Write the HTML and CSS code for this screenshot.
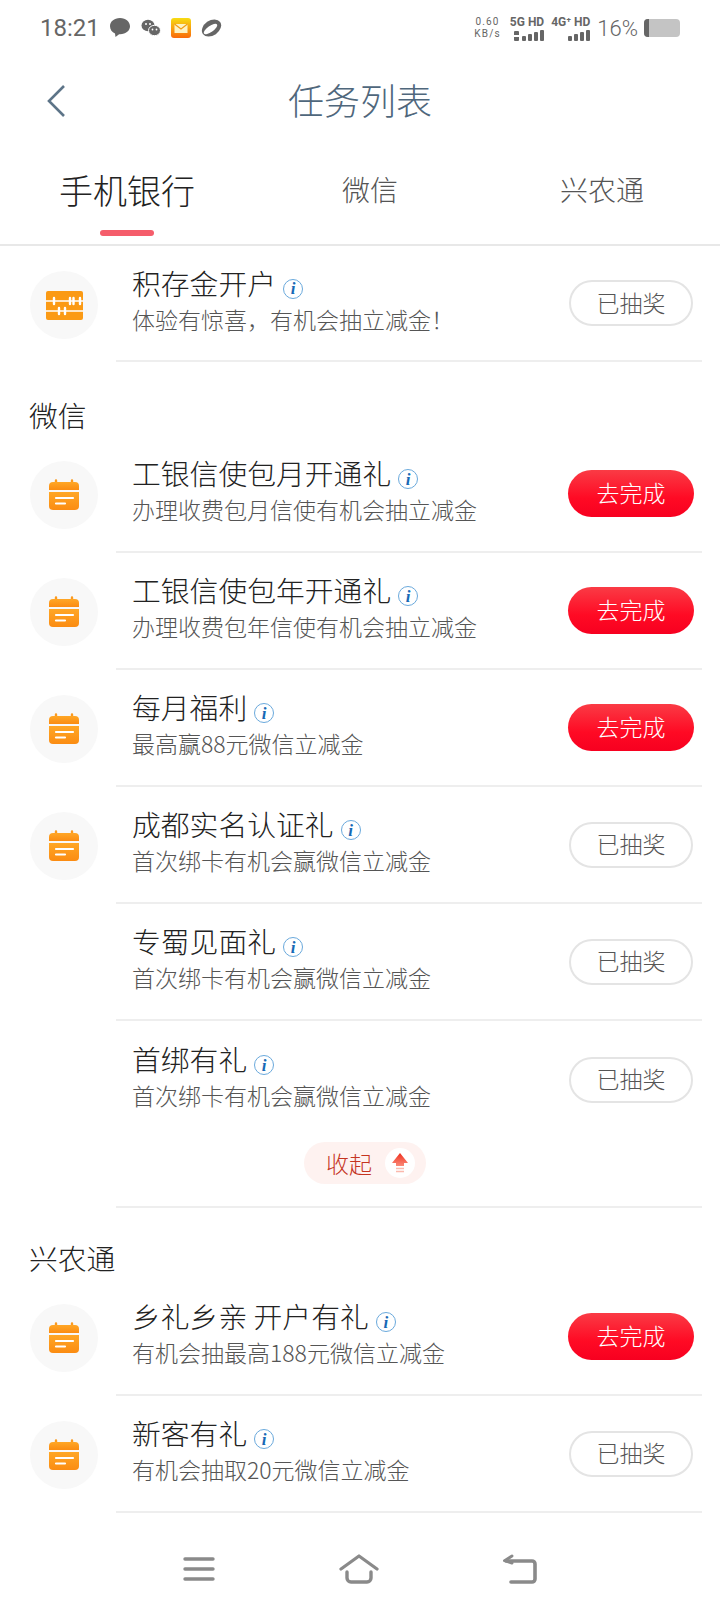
FILE: index.html
```html
<!DOCTYPE html>
<html lang="zh-CN">
<head>
    <meta charset="UTF-8">
    <title>任务列表</title>
    <link rel="stylesheet" href="styles.css">
</head>
<body>
    <svg class="defs" width="0" height="0">
        <defs>
            <linearGradient id="orange" x1="0" y1="0" x2="0" y2="1">
                <stop offset="0" stop-color="#ffa726"/>
                <stop offset="1" stop-color="#fb8c12"/>
            </linearGradient>
            <linearGradient id="arrow" x1="0" y1="0" x2="0" y2="1">
                <stop offset="0" stop-color="#ee2f1e"/>
                <stop offset="1" stop-color="#fb8a78"/>
            </linearGradient>
            <symbol id="calendar" viewBox="0 0 32 32">
                <path d="M8 1.500v3M24 1.500v3" stroke="#fb9a1f" stroke-width="2.400" stroke-linecap="round"/>
                <path d="M5 3h22a4 4 0 0 1 4 4v4H1V7a4 4 0 0 1 4-4z" fill="url(#orange)"/>
                <path d="M1 13h30v14a4 4 0 0 1-4 4H5a4 4 0 0 1-4-4z" fill="url(#orange)"/>
                <path d="M8 19h17M8 24.500h9" stroke="#fff" stroke-width="2.200" stroke-linecap="round"/>
            </symbol>
        </defs>
    </svg>
    <div class="status_bar">
        <span class="time">18:21</span>
        <svg class="st_icon" width="22" height="20" viewBox="0 0 22 20"><path d="M11 0C5 0 1 3.600 1 8.300c0 3.300 2 6 5 7.300l.5 3.400 3.600-2.700H11c6 0 10-3.700 10-8S17 0 11 0z" fill="#666"/></svg>
        <svg class="st_icon" width="20" height="18" viewBox="0 0 20 18"><ellipse cx="7" cy="6.500" rx="6.500" ry="5.700" fill="#666"/><ellipse cx="13.500" cy="11.500" rx="6" ry="5.200" fill="#666" stroke="#fff"/><circle cx="5" cy="5" r="1" fill="#fff"/><circle cx="9" cy="5" r="1" fill="#fff"/><circle cx="11.500" cy="10.500" r=".9" fill="#fff"/><circle cx="15.500" cy="10.500" r=".9" fill="#fff"/></svg>
        <svg class="st_icon" width="20" height="20" viewBox="0 0 20 20"><defs><linearGradient id="mail" x1="0" y1="0" x2="0" y2="1"><stop offset="0" stop-color="#f7dc13"/><stop offset="1" stop-color="#f96a0a"/></linearGradient></defs><rect width="20" height="20" rx="3" fill="url(#mail)"/><rect x="3.500" y="6" width="13" height="9" fill="#fdf3c4"/><path d="M3.500 6l6.500 5 6.500-5" fill="none" stroke="#f29a12" stroke-width="1.200"/></svg>
        <svg class="st_icon" width="21" height="20" viewBox="0 0 21 20"><ellipse cx="10.500" cy="10" rx="10.500" ry="7.500" transform="rotate(-35 10.500 10)" fill="#666"/><ellipse cx="9.500" cy="11" rx="8" ry="3" transform="rotate(-35 9.500 11)" fill="#fff"/></svg>
        <div class="st_right">
            <div class="speed"><span>0.60</span><span>KB/s</span></div>
            <div class="net">
                <span class="net_name">5G HD</span>
                <div class="bars"><i class="updown"></i><i class="b1"></i><i class="b2"></i><i class="b3"></i><i class="b4"></i></div>
            </div>
            <div class="net">
                <span class="net_name">4G⁺ HD</span>
                <div class="bars"><i class="b1"></i><i class="b2"></i><i class="b3"></i><i class="b4"></i></div>
            </div>
            <span class="percent">16%</span>
            <div class="battery"><div class="battery_level"></div></div>
        </div>
    </div>

    <header class="title_bar">
        <svg class="back" width="22" height="34" viewBox="0 0 22 34"><path d="M18 2L3 17l15 15" fill="none" stroke="#5d7488" stroke-width="2.600"/></svg>
        <h1>任务列表</h1>
    </header>

    <nav class="tabs">
        <div class="tab active">手机银行</div>
        <div class="tab">微信</div>
        <div class="tab">兴农通</div>
    </nav>

    <main>
        <div class="task first">
            <div class="task_icon">
                <svg width="37" height="29" viewBox="0 0 37 29">
                    <rect width="37" height="29" rx="2" fill="#fb9a14"/>
                    <path d="M0 10h37M0 20h37" stroke="#fff" stroke-width="1.600"/>
                    <path d="M8 7v6M24 7v6M27.500 7v6M34 7v6M13 17v6M19 17v6" stroke="#fff" stroke-width="2.400" stroke-linecap="round"/>
                </svg>
            </div>
            <div class="task_body">
                <div class="task_text">
                    <div class="task_title">积存金开户<span class="info">i</span></div>
                    <div class="task_sub">体验有惊喜，有机会抽立减金！</div>
                </div>
                <button class="btn done">已抽奖</button>
            </div>
        </div>

        <div class="section_name">微信</div>
        <div class="task">
            <div class="task_icon"><svg width="32" height="32"><use href="#calendar"/></svg></div>
            <div class="task_body">
                <div class="task_text">
                    <div class="task_title">工银信使包月开通礼<span class="info">i</span></div>
                    <div class="task_sub">办理收费包月信使有机会抽立减金</div>
                </div>
                <button class="btn todo">去完成</button>
            </div>
        </div>
        <div class="task">
            <div class="task_icon"><svg width="32" height="32"><use href="#calendar"/></svg></div>
            <div class="task_body">
                <div class="task_text">
                    <div class="task_title">工银信使包年开通礼<span class="info">i</span></div>
                    <div class="task_sub">办理收费包年信使有机会抽立减金</div>
                </div>
                <button class="btn todo">去完成</button>
            </div>
        </div>
        <div class="task">
            <div class="task_icon"><svg width="32" height="32"><use href="#calendar"/></svg></div>
            <div class="task_body">
                <div class="task_text">
                    <div class="task_title">每月福利<span class="info">i</span></div>
                    <div class="task_sub">最高赢88元微信立减金</div>
                </div>
                <button class="btn todo">去完成</button>
            </div>
        </div>
        <div class="task">
            <div class="task_icon"><svg width="32" height="32"><use href="#calendar"/></svg></div>
            <div class="task_body">
                <div class="task_text">
                    <div class="task_title">成都实名认证礼<span class="info">i</span></div>
                    <div class="task_sub">首次绑卡有机会赢微信立减金</div>
                </div>
                <button class="btn done">已抽奖</button>
            </div>
        </div>
        <div class="task">
            <div class="task_icon empty"></div>
            <div class="task_body">
                <div class="task_text">
                    <div class="task_title">专蜀见面礼<span class="info">i</span></div>
                    <div class="task_sub">首次绑卡有机会赢微信立减金</div>
                </div>
                <button class="btn done">已抽奖</button>
            </div>
        </div>
        <div class="task last">
            <div class="task_icon empty"></div>
            <div class="task_body">
                <div class="task_text">
                    <div class="task_title">首绑有礼<span class="info">i</span></div>
                    <div class="task_sub">首次绑卡有机会赢微信立减金</div>
                </div>
                <button class="btn done">已抽奖</button>
            </div>
        </div>
        <div class="collapse_row">
            <div class="collapse">
                收起
                <span class="collapse_arrow">
                    <svg width="16" height="21" viewBox="0 0 16 21">
                        <path d="M8 0l8 10h-4v3H4v-3H0z" fill="url(#arrow)"/>
                        <path d="M4 15.500h8M4 18.500h8" stroke="#fbb9ad" stroke-width="1.500"/>
                    </svg>
                </span>
            </div>
        </div>

        <div class="section_name second">兴农通</div>
        <div class="task">
            <div class="task_icon"><svg width="32" height="32"><use href="#calendar"/></svg></div>
            <div class="task_body">
                <div class="task_text">
                    <div class="task_title">乡礼乡亲 开户有礼<span class="info">i</span></div>
                    <div class="task_sub">有机会抽最高188元微信立减金</div>
                </div>
                <button class="btn todo">去完成</button>
            </div>
        </div>
        <div class="task">
            <div class="task_icon"><svg width="32" height="32"><use href="#calendar"/></svg></div>
            <div class="task_body">
                <div class="task_text">
                    <div class="task_title">新客有礼<span class="info">i</span></div>
                    <div class="task_sub">有机会抽取20元微信立减金</div>
                </div>
                <button class="btn done">已抽奖</button>
            </div>
        </div>
    </main>

    <footer class="nav_bar">
        <svg width="32" height="24" viewBox="0 0 32 24"><path d="M2 2h28M2 12h28M2 22h28" stroke="#8a8a8a" stroke-width="3.400" stroke-linecap="round"/></svg>
        <svg width="40" height="30" viewBox="0 0 40 30"><path d="M2 15L20 2l18 13" fill="none" stroke="#8a8a8a" stroke-width="3.200" stroke-linecap="round" stroke-linejoin="round"/><path d="M8 18v6a4 4 0 0 0 4 4h16a4 4 0 0 0 4-4v-6" fill="none" stroke="#8a8a8a" stroke-width="3.400" stroke-linecap="round"/></svg>
        <svg width="34" height="30" viewBox="0 0 34 30"><path d="M9 2L2 6.500 9 9" fill="none" stroke="#8a8a8a" stroke-width="3" stroke-linecap="round"/><path d="M3 7h26a3 3 0 0 1 3 3v15a3 3 0 0 1-3 3H8" fill="none" stroke="#8a8a8a" stroke-width="3.600" stroke-linecap="round"/></svg>
    </footer>
</body>
</html>
```

FILE: styles.css
```css
* {
    box-sizing: border-box;
}
html,
body {
    margin: 0;
    height: 1612px;
    overflow: hidden;
    background-color: #fff;
}
body {
    font-family: "Noto Sans CJK SC", "Noto Sans", sans-serif;
    color: #3a3a3a;
}
.defs {
    position: absolute;
}
.status_bar {
    display: flex;
    align-items: center;
    height: 56px;
    padding: 0 40px;
    color: #666;
}
.time {
    font-family: Roboto, sans-serif;
    font-size: 24px;
    margin-right: 9px;
}
.st_icon {
    margin-right: 10px;
}
.st_right {
    display: flex;
    align-items: center;
    margin-left: auto;
}
.speed {
    display: flex;
    flex-direction: column;
    align-items: center;
    font-family: Roboto, sans-serif;
    font-size: 10px;
    line-height: 12px;
    margin-right: 9px;
    letter-spacing: 1.200px;
}
.net {
    display: flex;
    flex-direction: column;
    align-items: flex-end;
    margin-right: 7px;
}
.net_name {
    font-family: Roboto, sans-serif;
    font-size: 12px;
    font-weight: bold;
    line-height: 13px;
    white-space: nowrap;
}
.bars {
    display: flex;
    align-items: flex-end;
    gap: 2px;
    height: 12px;
}
.bars i {
    display: block;
    width: 4px;
    background-color: #666;
    border-radius: 1px;
}
.bars .b1 { height: 5px; }
.bars .b2 { height: 7px; }
.bars .b3 { height: 9px; }
.bars .b4 { height: 11px; }
.bars .updown {
    width: 5px;
    height: 10px;
    margin-right: 1px;
    background: linear-gradient(#666 40%, transparent 40%, transparent 60%, #666 60%);
}
.percent {
    font-family: Roboto, sans-serif;
    font-weight: 300;
    font-size: 22px;
    margin-right: 6px;
}
.battery {
    width: 36px;
    height: 18px;
    border-radius: 4px;
    background-color: #c4c4c4;
    overflow: hidden;
}
.battery_level {
    width: 5px;
    height: 100%;
    background-color: #666;
}

.title_bar {
    position: relative;
    display: flex;
    justify-content: center;
    align-items: center;
    height: 86px;
}
.title_bar h1 {
    margin: 0;
    font-size: 36px;
    font-weight: 300;
    color: #4f677c;
}
.back {
    position: absolute;
    left: 46px;
    top: 28px;
}

.tabs {
    display: flex;
    height: 104px;
    border-bottom: 2px solid #e8e8e8;
}
.tab {
    position: relative;
    width: 232px;
    padding-top: 27px;
    font-size: 28px;
    font-weight: 300;
    text-align: center;
    color: #555;
}
.tab.active {
    width: 254px;
    font-size: 34px;
    padding-top: 23px;
    color: #222;
}
.tab.active::after {
    content: "";
    position: absolute;
    left: 100px;
    bottom: 8px;
    width: 54px;
    height: 6px;
    border-radius: 3px;
    background-color: #f55d6b;
}

.task {
    display: flex;
    height: 117px;
}
.task.first {
    height: 116px;
}
.task_icon {
    flex: none;
    display: flex;
    justify-content: center;
    align-items: center;
    width: 68px;
    height: 68px;
    margin: 25px 18px 0 30px;
    border-radius: 50%;
    background-color: #f8f8f8;
}
.task_icon.empty {
    background: none;
}
.task_body {
    flex: none;
    display: flex;
    justify-content: space-between;
    align-items: center;
    width: 586px;
    padding: 0 9px 0 16px;
    border-bottom: 2px solid #eee;
}
.task.last .task_body {
    border-bottom: none;
}
.task_text {
    margin-bottom: 8px;
}
.task_title {
    display: flex;
    align-items: center;
    font-size: 28.800px;
    font-weight: 300;
    line-height: 40px;
    color: #222;
}
.task_sub {
    font-size: 23px;
    font-weight: 300;
    line-height: 33px;
    color: #555;
}
.info {
    display: inline-flex;
    justify-content: center;
    align-items: center;
    width: 20px;
    height: 20px;
    margin: 12px 0 0 7px;
    border: 1px solid #6aa9dc;
    border-radius: 50%;
    font-family: "Liberation Serif", serif;
    font-size: 17px;
    font-style: italic;
    font-weight: bold;
    line-height: 1;
    color: #1769b5;
}
.btn {
    width: 124px;
    height: 46px;
    padding: 0 0 3px;
    border-radius: 23px;
    font-family: inherit;
    font-size: 23px;
    font-weight: 300;
    outline: none;
}
.btn.done {
    border: 2px solid #e4e4e4;
    background-color: #fff;
    color: #555;
}
.btn.todo {
    width: 126px;
    height: 47px;
    margin-right: -1px;
    border: none;
    border-radius: 24px;
    background: linear-gradient(#fa3b45, #ff0a24 60%, #f70020);
    color: #fff;
}

.section_name {
    height: 74px;
    padding-top: 33px;
    padding-left: 29px;
    font-size: 28.800px;
    font-weight: 300;
    line-height: 40px;
    color: #222;
}
.section_name.second {
    height: 71px;
    padding-top: 30px;
}
.collapse_row {
    display: flex;
    justify-content: center;
    align-items: flex-start;
    width: 586px;
    height: 70px;
    margin-left: 116px;
    padding: 4px 88px 0 0;
    border-bottom: 2px solid #eee;
}
.collapse {
    display: flex;
    justify-content: space-between;
    align-items: center;
    width: 122px;
    height: 42px;
    padding: 0 11px 0 22px;
    border-radius: 21px;
    background-color: #fef2f0;
    font-size: 23px;
    font-weight: 300;
    color: #c5341f;
}
.collapse_arrow {
    display: flex;
    justify-content: center;
    align-items: center;
    width: 30px;
    height: 30px;
    border-radius: 50%;
    background-color: #fff;
}
.nav_bar {
    display: flex;
    justify-content: center;
    align-items: center;
    gap: 124px;
    height: 99px;
    padding-top: 12px;
}
```
